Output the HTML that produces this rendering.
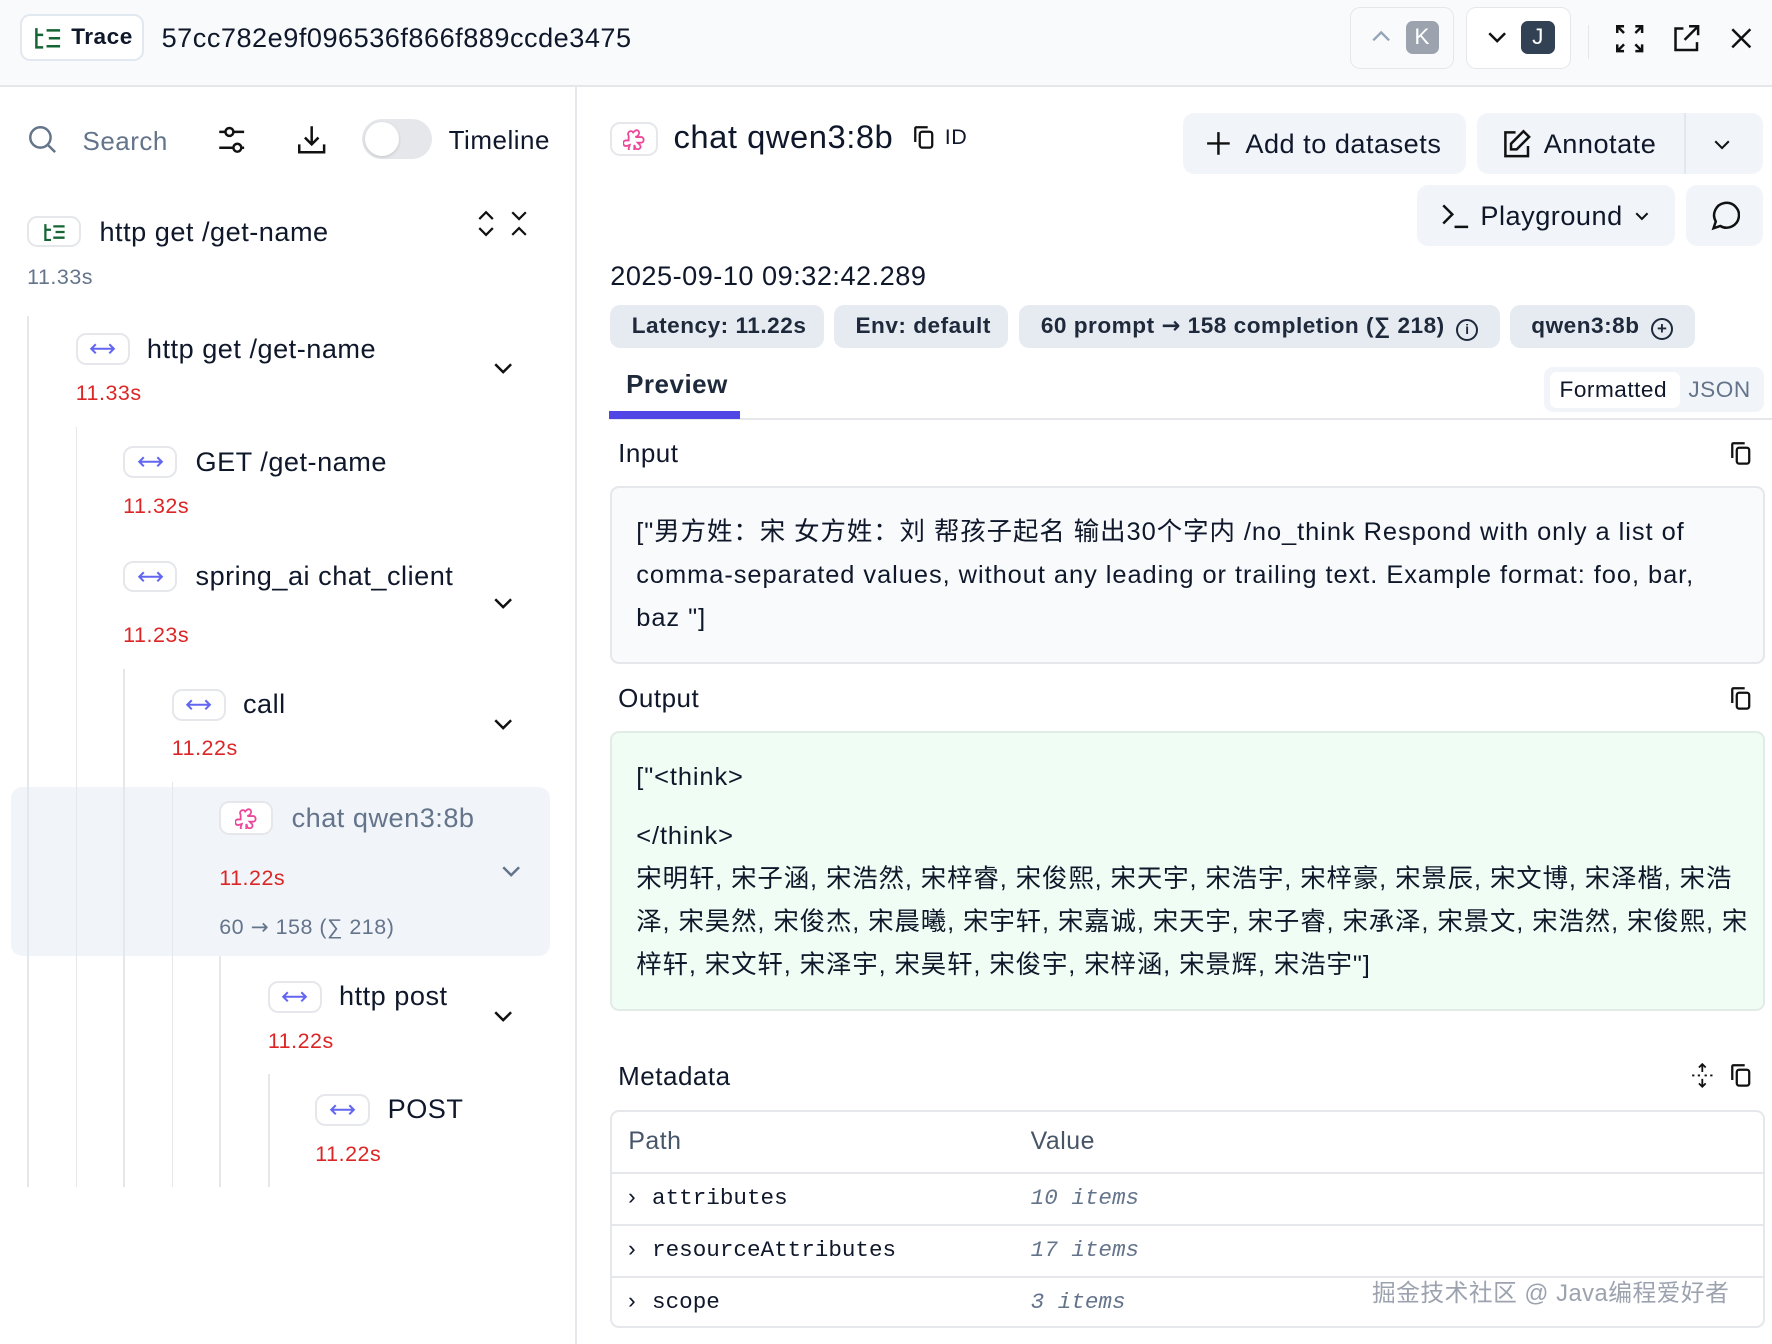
<!DOCTYPE html>
<html><head><meta charset="utf-8"><style>
html,body{margin:0;padding:0;background:#fff;overflow:hidden}
body{width:1772px;height:1344px}
#w{zoom:1.1301;width:1568px;height:1190px;position:relative;font-family:"Liberation Sans","Noto Sans CJK SC",sans-serif;color:#0f172a;letter-spacing:0.45px}
.a{position:absolute}
.t{position:absolute;white-space:nowrap;line-height:1}
.ib{position:absolute;width:46px;height:26px;border:2px solid #e5e7eb;border-radius:9px;background:#fff;box-sizing:border-box;display:flex;align-items:center;justify-content:center}
.r{color:#dc2626;font-size:19px}
.vl{position:absolute;width:1.5px;background:#e5e7eb}
.btn{position:absolute;background:#f1f5f9;border-radius:10px;box-sizing:border-box}
.bd{position:absolute;top:270px;height:38px;background:#e6ebf2;border-radius:9px;font-size:20px;font-weight:bold;color:#1e293b;line-height:38px;padding:0 19px;box-sizing:border-box;white-space:nowrap}
.mono{font-family:"Liberation Mono","DejaVu Sans Mono",monospace;letter-spacing:0}
.ar{font-family:"DejaVu Sans",sans-serif}
</style></head><body><div id="w">
<svg width="0" height="0" style="position:absolute"><defs><symbol id="lr" viewBox="0 0 24 12"><path d="M2 6h20M6 2L2 6l4 4M18 2l4 4-4 4" fill="none" stroke="#6366f1" stroke-width="1.8"/></symbol></defs></svg>
<!-- header -->
<div class="a" style="left:0;top:0;width:1568px;height:77px;background:#f8fafc;border-bottom:2px solid #e5e7eb;box-sizing:border-box"></div>
<div class="a" style="left:18px;top:12px;width:109px;height:42px;border:2px solid #e2e8f0;border-radius:9px;background:#fff;box-sizing:border-box"></div>
<svg class="a" style="left:29px;top:24px" width="26" height="20" viewBox="0 0 26 20" fill="none" stroke="#166534" stroke-width="2.2"><path d="M3 1v17h6M3 7h6M12 3h12M14 10h10M12 17h12"/></svg>
<div class="t" style="left:63px;top:23px;font-size:20px;font-weight:bold">Trace</div>
<div class="t" style="left:143px;top:21px;font-size:24px">57cc782e9f096536f866f889ccde3475</div>
<div class="a" style="left:1195px;top:6px;width:92px;height:55px;border:1.5px solid #e5e7eb;border-radius:9px;box-sizing:border-box;background:#f8fafc"></div>
<svg class="a" style="left:1213px;top:26px" width="18" height="12" fill="none" stroke="#94a3b8" stroke-width="2"><path d="M2 10l7-7 7 7"/></svg>
<div class="a" style="left:1244px;top:19px;width:29px;height:29px;border-radius:6px;background:#9ca3af;color:#fff;font-size:20px;text-align:center;line-height:29px">K</div>
<div class="a" style="left:1297px;top:6px;width:93px;height:55px;border:1.5px solid #e5e7eb;border-radius:9px;box-sizing:border-box;background:#fff"></div>
<svg class="a" style="left:1316px;top:27px" width="18" height="12" fill="none" stroke="#111" stroke-width="2.2"><path d="M2 2l7 7 7-7"/></svg>
<div class="a" style="left:1346px;top:19px;width:30px;height:29px;border-radius:6px;background:#334155;color:#fff;font-size:20px;text-align:center;line-height:29px">J</div>
<div class="a" style="left:1405px;top:22px;width:1.5px;height:30px;background:#e5e7eb"></div>
<svg class="a" style="left:1429px;top:21px" width="26" height="26" fill="none" stroke="#111" stroke-width="2.2"><path d="M2 8V2h6M2 2l6 6M24 8V2h-6M24 2l-6 6M2 18v6h6M2 24l6-6M24 18v6h-6M24 24l-6-6"/></svg>
<svg class="a" style="left:1479px;top:21px" width="26" height="26" fill="none" stroke="#111" stroke-width="2.2"><path d="M11 4H4v19h19v-7M16 2h8v8M24 2L12 14"/></svg>
<svg class="a" style="left:1531px;top:24px" width="20" height="20" fill="none" stroke="#111" stroke-width="2.2"><path d="M2 2l16 16M18 2L2 18"/></svg>

<!-- sidebar -->
<div class="a" style="left:509px;top:77px;width:1.5px;height:1113px;background:#e5e7eb"></div>
<svg class="a" style="left:25px;top:111px" width="26" height="26" fill="none" stroke="#64748b" stroke-width="2.2"><circle cx="11" cy="11" r="9"/><path d="M18 18l6 6"/></svg>
<div class="t" style="left:73px;top:113px;font-size:23px;color:#64748b">Search</div>
<svg class="a" style="left:192px;top:110px" width="26" height="28" fill="none" stroke="#111" stroke-width="2.2"><path d="M2 7h6M15 7h9M2 21h13M22 21h2"/><circle cx="11" cy="7" r="3.5"/><circle cx="18" cy="21" r="3.5"/></svg>
<svg class="a" style="left:263px;top:110px" width="26" height="27" fill="none" stroke="#111" stroke-width="2.2"><path d="M13 2v16M7 12l6 6 6-6M2 18v7h22v-7"/></svg>
<div class="a" style="left:320px;top:105px;width:62px;height:36px;border-radius:18px;background:#e5e7eb"></div>
<div class="a" style="left:323px;top:108px;width:30px;height:30px;border-radius:15px;background:#fff;box-shadow:0 1px 3px rgba(0,0,0,.15)"></div>
<div class="t" style="left:397px;top:112px;font-size:23px">Timeline</div>

<div class="ib" style="left:24px;top:191px;width:48px;height:28px"><svg width="22" height="16" fill="none" stroke="#166534" stroke-width="2"><path d="M3 1v14h5M3 6h5M10 3h10M12 8h8M10 13h10"/></svg></div>
<div class="t" style="left:88px;top:193px;font-size:24px">http get /get-name</div>
<svg class="a" style="left:422px;top:186px" width="16" height="24" fill="none" stroke="#111" stroke-width="2"><path d="M2 8l6-6 6 6M2 16l6 6 6-6"/></svg>
<svg class="a" style="left:451px;top:186px" width="16" height="24" fill="none" stroke="#111" stroke-width="2"><path d="M2 2l6 6 6-6M2 22l6-6 6 6"/></svg>
<div class="t" style="left:24px;top:236px;font-size:19px;color:#64748b">11.33s</div>

<div class="vl" style="left:24px;top:280px;height:770px"></div>
<div class="vl" style="left:67px;top:378px;height:672px"></div>
<div class="vl" style="left:109px;top:592px;height:458px"></div>
<div class="vl" style="left:152px;top:692px;height:358px"></div>
<div class="a" style="left:10px;top:696px;width:477px;height:150px;background:#f1f5f9;border-radius:10px"></div>
<div class="vl" style="left:24px;top:696px;height:150px;background:#e2e8f0"></div>
<div class="vl" style="left:67px;top:696px;height:150px;background:#e2e8f0"></div>
<div class="vl" style="left:109px;top:696px;height:150px;background:#e2e8f0"></div>
<div class="vl" style="left:152px;top:696px;height:150px;background:#e2e8f0"></div>
<div class="vl" style="left:194px;top:846px;height:204px"></div>
<div class="vl" style="left:237px;top:950px;height:100px"></div>

<!-- tree rows -->
<div class="ib" style="left:67px;top:295px;width:48px;height:28px"><svg width="24" height="12"><use href="#lr"/></svg></div>
<div class="t" style="left:130px;top:296px;font-size:24px">http get /get-name</div>
<div class="t r" style="left:67px;top:339px">11.33s</div>
<svg class="a" style="left:436px;top:320px" width="18" height="12" fill="none" stroke="#111" stroke-width="2.2"><path d="M2 2l7 7 7-7"/></svg>

<div class="ib" style="left:109px;top:395px;width:48px;height:28px"><svg width="24" height="12"><use href="#lr"/></svg></div>
<div class="t" style="left:173px;top:396px;font-size:24px">GET /get-name</div>
<div class="t r" style="left:109px;top:439px">11.32s</div>

<div class="ib" style="left:109px;top:496px;width:48px;height:28px"><svg width="24" height="12"><use href="#lr"/></svg></div>
<div class="t" style="left:173px;top:497px;font-size:24px">spring_ai chat_client</div>
<div class="t r" style="left:109px;top:553px">11.23s</div>
<svg class="a" style="left:436px;top:528px" width="18" height="12" fill="none" stroke="#111" stroke-width="2.2"><path d="M2 2l7 7 7-7"/></svg>

<div class="ib" style="left:152px;top:610px;width:48px;height:28px"><svg width="24" height="12"><use href="#lr"/></svg></div>
<div class="t" style="left:215px;top:611px;font-size:24px">call</div>
<div class="t r" style="left:152px;top:653px">11.22s</div>
<svg class="a" style="left:436px;top:635px" width="18" height="12" fill="none" stroke="#111" stroke-width="2.2"><path d="M2 2l7 7 7-7"/></svg>

<div class="ib" style="left:194px;top:709px;width:48px;height:30px"><svg width="20" height="20" fill="none" stroke="#ec4899" stroke-width="1.6"><path d="M10 3c3-3 6 1 3 4l-2 1h5c3 0 3 5 0 5h-3l2 2c2 3-2 5-4 3l-1-3v4c-1 3-5 2-5-1l1-3-3 1c-3 0-4-4-1-5h3L5 7C3 4 7 1 9 4z"/></svg></div>
<div class="t" style="left:258px;top:711px;font-size:24px;color:#64748b">chat qwen3:8b</div>
<div class="t r" style="left:194px;top:768px">11.22s</div>
<svg class="a" style="left:443px;top:765px" width="18" height="12" fill="none" stroke="#64748b" stroke-width="2.2"><path d="M2 2l7 7 7-7"/></svg>
<div class="t" style="left:194px;top:811px;font-size:19px;color:#64748b">60 <span class="ar">→</span> 158 (∑ 218)</div>

<div class="ib" style="left:237px;top:868px;width:48px;height:28px"><svg width="24" height="12"><use href="#lr"/></svg></div>
<div class="t" style="left:300px;top:869px;font-size:24px">http post</div>
<div class="t r" style="left:237px;top:912px">11.22s</div>
<svg class="a" style="left:436px;top:894px" width="18" height="12" fill="none" stroke="#111" stroke-width="2.2"><path d="M2 2l7 7 7-7"/></svg>

<div class="ib" style="left:279px;top:968px;width:48px;height:28px"><svg width="24" height="12"><use href="#lr"/></svg></div>
<div class="t" style="left:343px;top:969px;font-size:24px">POST</div>
<div class="t r" style="left:279px;top:1012px">11.22s</div>

<!-- right panel -->
<div class="ib" style="left:540px;top:108px;width:42px;height:30px"><svg width="20" height="20" fill="none" stroke="#ec4899" stroke-width="1.6"><path d="M10 3c3-3 6 1 3 4l-2 1h5c3 0 3 5 0 5h-3l2 2c2 3-2 5-4 3l-1-3v4c-1 3-5 2-5-1l1-3-3 1c-3 0-4-4-1-5h3L5 7C3 4 7 1 9 4z"/></svg></div>
<div class="t" style="left:596px;top:107px;font-size:29px">chat qwen3:8b</div>
<svg class="a" style="left:808px;top:111px" width="20" height="22" fill="none" stroke="#111" stroke-width="2"><rect x="6" y="6" width="11" height="14" rx="2"/><path d="M2 15V3a1 1 0 011-1h10"/></svg>
<div class="t" style="left:836px;top:112px;font-size:19px">ID</div>

<div class="btn" style="left:1047px;top:100px;width:250px;height:54px"></div>
<svg class="a" style="left:1067px;top:116px" width="22" height="22" fill="none" stroke="#111" stroke-width="2.2"><path d="M11 1v20M1 11h20"/></svg>
<div class="t" style="left:1102px;top:115px;font-size:24px">Add to datasets</div>
<div class="btn" style="left:1307px;top:100px;width:253px;height:54px"></div>
<div class="a" style="left:1490px;top:100px;width:1.5px;height:54px;background:#e2e8f0"></div>
<svg class="a" style="left:1329px;top:114px" width="26" height="26" fill="none" stroke="#111" stroke-width="2.2"><path d="M12 3H3v21h20v-9M19 2l5 5-11 11H8v-5z"/></svg>
<div class="t" style="left:1366px;top:115px;font-size:24px">Annotate</div>
<svg class="a" style="left:1516px;top:123px" width="16" height="10" fill="none" stroke="#111" stroke-width="1.8"><path d="M2 2l6 6 6-6"/></svg>
<div class="btn" style="left:1254px;top:164px;width:228px;height:54px"></div>
<svg class="a" style="left:1275px;top:179px" width="26" height="24" fill="none" stroke="#111" stroke-width="2.2"><path d="M2 3l8 8-8 8M12 22h12"/></svg>
<div class="t" style="left:1310px;top:179px;font-size:24px">Playground</div>
<svg class="a" style="left:1446px;top:187px" width="14" height="9" fill="none" stroke="#111" stroke-width="1.8"><path d="M2 2l5 5 5-5"/></svg>
<div class="btn" style="left:1492px;top:164px;width:68px;height:54px"></div>
<svg class="a" style="left:1512px;top:177px" width="28" height="28" fill="none" stroke="#111" stroke-width="2.2"><path d="M4 25l2-6a11 11 0 1 1 4 4z"/></svg>

<div class="t" style="left:540px;top:232px;font-size:24px">2025-09-10 09:32:42.289</div>
<div class="bd" style="left:540px;width:189px">Latency: 11.22s</div>
<div class="bd" style="left:738px;width:154px">Env: default</div>
<div class="bd" style="left:902px;width:425px">60 prompt <span class="ar">→</span> 158 completion (∑ 218) <span style="display:inline-block;width:16px;height:16px;border:1.8px solid #1e293b;border-radius:50%;font-size:12px;line-height:16px;text-align:center;vertical-align:-1px;margin-left:4px;letter-spacing:0">i</span></div>
<div class="bd" style="left:1336px;width:164px">qwen3:8b <span style="display:inline-block;width:16px;height:16px;border:1.8px solid #1e293b;border-radius:50%;font-size:15px;line-height:16px;text-align:center;vertical-align:-1px;margin-left:4px;letter-spacing:0">+</span></div>

<div class="t" style="left:554px;top:328px;font-size:23px;font-weight:bold;color:#1e293b">Preview</div>
<div class="a" style="left:540px;top:370px;width:1028px;height:2px;background:#e5e7eb"></div>
<div class="a" style="left:539px;top:364px;width:116px;height:7px;background:#4f46e5"></div>
<div class="a" style="left:1366px;top:325px;width:195px;height:40px;background:#f1f5f9;border-radius:8px"></div>
<div class="a" style="left:1372px;top:329px;width:115px;height:32px;background:#fff;border-radius:6px"></div>
<div class="t" style="left:1380px;top:335px;font-size:20px">Formatted</div>
<div class="t" style="left:1494px;top:335px;font-size:20px;color:#64748b">JSON</div>

<div class="t" style="left:547px;top:389px;font-size:23px">Input</div>
<svg class="a" style="left:1531px;top:390px" width="20" height="22" fill="none" stroke="#111" stroke-width="2"><rect x="6" y="6" width="11" height="14" rx="2"/><path d="M2 15V3a1 1 0 011-1h10"/></svg>
<div class="a" style="left:540px;top:430px;width:1022px;height:158px;background:#f8fafc;border:2px solid #e5e7eb;border-radius:8px;box-sizing:border-box"></div>
<div class="a" style="left:563px;top:452px;font-size:22.5px;line-height:38px;white-space:nowrap;letter-spacing:0.85px">["男方姓：宋 女方姓：刘 帮孩子起名 输出30个字内 /no_think Respond with only a list of<br>comma-separated values, without any leading or trailing text. Example format: foo, bar,<br>baz "]</div>

<div class="t" style="left:547px;top:606px;font-size:23px">Output</div>
<svg class="a" style="left:1531px;top:607px" width="20" height="22" fill="none" stroke="#111" stroke-width="2"><rect x="6" y="6" width="11" height="14" rx="2"/><path d="M2 15V3a1 1 0 011-1h10"/></svg>
<div class="a" style="left:540px;top:647px;width:1022px;height:248px;background:#f0fdf4;border:2px solid #e2ece6;border-radius:8px;box-sizing:border-box"></div>
<div class="a" style="left:563px;top:669px;font-size:22.5px;line-height:38px;white-space:nowrap;letter-spacing:0.8px">["&lt;think&gt;<br><div style="height:14px"></div>&lt;/think&gt;<br>宋明轩, 宋子涵, 宋浩然, 宋梓睿, 宋俊熙, 宋天宇, 宋浩宇, 宋梓豪, 宋景辰, 宋文博, 宋泽楷, 宋浩<br>泽, 宋昊然, 宋俊杰, 宋晨曦, 宋宇轩, 宋嘉诚, 宋天宇, 宋子睿, 宋承泽, 宋景文, 宋浩然, 宋俊熙, 宋<br>梓轩, 宋文轩, 宋泽宇, 宋昊轩, 宋俊宇, 宋梓涵, 宋景辉, 宋浩宇"]</div>

<div class="t" style="left:547px;top:941px;font-size:23px">Metadata</div>
<svg class="a" style="left:1496px;top:941px" width="20" height="22" fill="none" stroke="#111" stroke-width="1.6"><path d="M10 1v7M7 4l3-3 3 3M10 21v-7M7 18l3 3 3-3M1 11h2M6 11h2M12 11h2M17 11h2"/></svg>
<svg class="a" style="left:1531px;top:941px" width="20" height="22" fill="none" stroke="#111" stroke-width="2"><rect x="6" y="6" width="11" height="14" rx="2"/><path d="M2 15V3a1 1 0 011-1h10"/></svg>
<div class="a" style="left:540px;top:982px;width:1022px;height:193px;border:2px solid #e5e7eb;border-radius:8px;box-sizing:border-box"></div>
<div class="a" style="left:541px;top:1037px;width:1020px;height:2px;background:#e5e7eb"></div>
<div class="a" style="left:541px;top:1083px;width:1020px;height:2px;background:#e5e7eb"></div>
<div class="a" style="left:541px;top:1129px;width:1020px;height:2px;background:#e5e7eb"></div>
<div class="t" style="left:556px;top:999px;font-size:22px;color:#475569">Path</div>
<div class="t" style="left:912px;top:999px;font-size:22px;color:#475569">Value</div>
<div class="t mono" style="left:553px;top:1050px;font-size:20px">›&nbsp;attributes</div>
<div class="t mono" style="left:912px;top:1050px;font-size:20px;font-style:italic;color:#64748b">10 items</div>
<div class="t mono" style="left:553px;top:1096px;font-size:20px">›&nbsp;resourceAttributes</div>
<div class="t mono" style="left:912px;top:1096px;font-size:20px;font-style:italic;color:#64748b">17 items</div>
<div class="t mono" style="left:553px;top:1142px;font-size:20px">›&nbsp;scope</div>
<div class="t mono" style="left:912px;top:1142px;font-size:20px;font-style:italic;color:#64748b">3 items</div>
<div class="t" style="left:1214px;top:1135px;font-size:21px;color:#9ca3af">掘金技术社区 @ Java编程爱好者</div>
</div></body></html>
